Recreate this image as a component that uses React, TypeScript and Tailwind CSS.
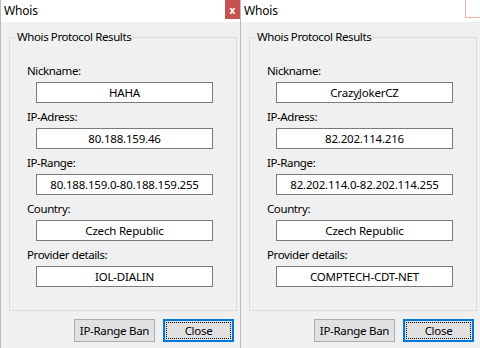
import React from 'react';

interface WhoisData {
  nickname: string;
  ip: string;
  range: string;
  country: string;
  provider: string;
}

const windows: { data: WhoisData; closeBox: 'red' | 'outline' | null }[] = [
  {
    data: {
      nickname: 'HAHA',
      ip: '80.188.159.46',
      range: '80.188.159.0-80.188.159.255',
      country: 'Czech Republic',
      provider: 'IOL-DIALIN',
    },
    closeBox: 'red',
  },
  {
    data: {
      nickname: 'CrazyJokerCZ',
      ip: '82.202.114.216',
      range: '82.202.114.0-82.202.114.255',
      country: 'Czech Republic',
      provider: 'COMPTECH-CDT-NET',
    },
    closeBox: 'outline',
  },
];

const Field: React.FC<{ label: string; value: string }> = ({ label, value }) => (
  <div className="flex flex-col">
    <div className="h-[16px] leading-[16px] pl-[17px] tracking-[-0.4px]">{label}</div>
    <div className="mt-[3px] ml-[26px] w-[177px] h-[21px] border border-[#7a7a7a] bg-white flex items-center justify-center leading-none tracking-[-0.2px]">
      {value}
    </div>
  </div>
);

const WhoisWindow: React.FC<{ data: WhoisData; closeBox: 'red' | 'outline' | null }> = ({ data, closeBox }) => (
  <div className="relative w-[240px] h-[348px] shrink-0 flex flex-col bg-[#f0f0f0] border-l border-[#bdbdbd]">
    <div className="h-[22px] bg-white flex items-center pl-[3px] text-[12px] text-black tracking-[-0.2px]">Whois</div>
    {closeBox === 'red' && (
      <div className="absolute top-0 right-0 w-[15px] h-[19px] bg-[#c75050] text-white text-[10px] font-bold flex items-center justify-center leading-none">
        x
      </div>
    )}
    {closeBox === 'outline' && (
      <div className="absolute top-0 right-0 w-[15px] h-[18px] border-l border-b border-[#eab3b3]" />
    )}

    <div className="relative mt-[15px] ml-[8px] w-[228px] h-[274px] border border-[#dcdcdc]">
      <div className="absolute -top-[9px] left-[6px] px-[1px] bg-[#f0f0f0] leading-[16px] tracking-[-0.4px]">
        Whois Protocol Results
      </div>
      <div className="pt-[25px] flex flex-col gap-[6px]">
        <Field label="Nickname:" value={data.nickname} />
        <Field label="IP-Adress:" value={data.ip} />
        <Field label="IP-Range:" value={data.range} />
        <Field label="Country:" value={data.country} />
        <Field label="Provider details:" value={data.provider} />
      </div>
    </div>

    <div className="mt-[8px] flex justify-end gap-[8px] pr-[6px] tracking-[-0.3px]">
      <button className="w-[81px] h-[23px] bg-[#e1e1e1] border border-[#adadad] leading-none">IP-Range Ban</button>
      <button className="w-[71px] h-[23px] bg-[#e1e1e1] border-2 border-[#0078d7] p-[1px] leading-none">
        <span className="w-full h-full flex items-center justify-center border border-dotted border-black">Close</span>
      </button>
    </div>
  </div>
);

export default function App() {
  return (
    <div
      className="w-[480px] h-[348px] overflow-hidden flex text-[11.5px] text-black"
      style={{ fontFamily: '"Noto Sans", "Open Sans", sans-serif' }}
    >
      {windows.map((w, i) => (
        <WhoisWindow key={i} data={w.data} closeBox={w.closeBox} />
      ))}
    </div>
  );
}
